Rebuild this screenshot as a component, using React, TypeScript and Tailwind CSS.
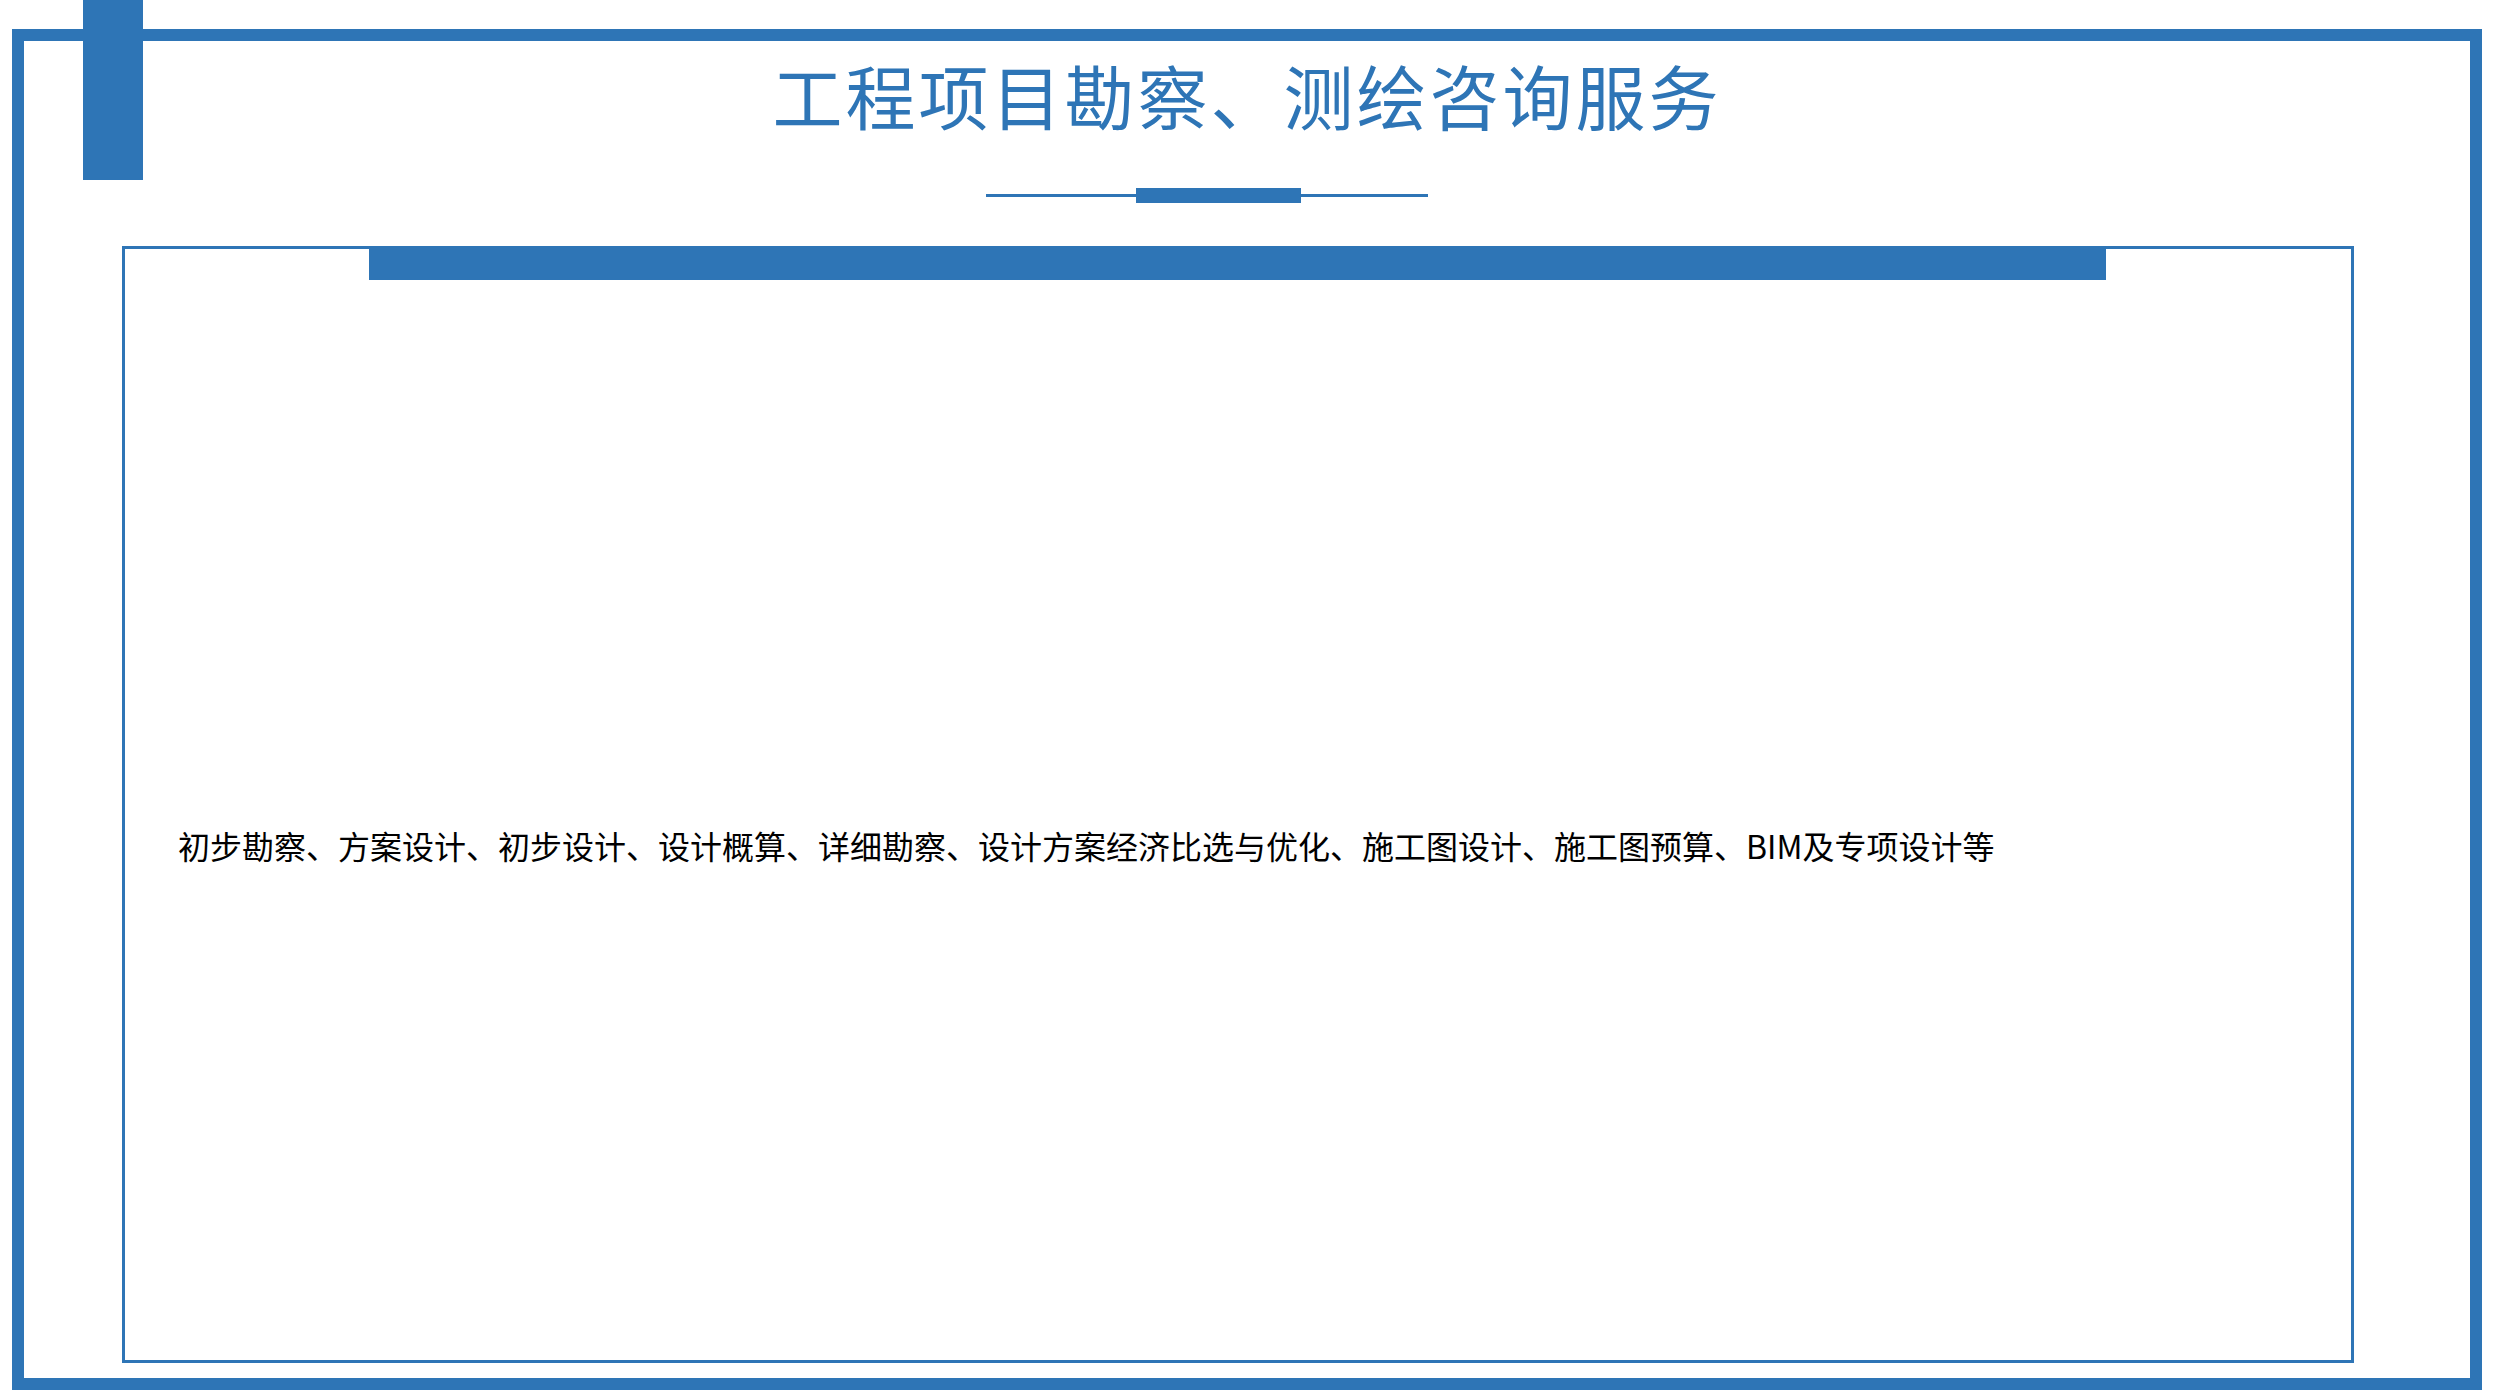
export default function App() {
  return (
    <div className="relative w-[2494px] h-[1396px] bg-white overflow-hidden" style={{ fontFamily: '"Noto Sans CJK SC", "Noto Sans", sans-serif' }}>
      <div className="absolute left-[12px] top-[29px] w-[2470px] h-[1361px] border-[12px] border-[#2E75B6]" />
      <div className="absolute left-[83px] top-0 w-[60px] h-[180px] bg-[#2E75B6]" />
      <div className="absolute left-0 top-[50px] w-full flex justify-center">
        <h1 className="text-[70px] leading-[90px] text-[#2E75B6] tracking-[3px]">工程项目勘察、测绘咨询服务</h1>
      </div>
      <div className="absolute left-[986px] top-[188px] w-[442px] h-[15px] flex items-center">
        <div className="h-[3px] w-[150px] bg-[#2E75B6]" />
        <div className="h-[15px] w-[165px] bg-[#2E75B6]" />
        <div className="h-[3px] flex-1 bg-[#2E75B6]" />
      </div>
      <div className="absolute left-[122px] top-[246px] w-[2232px] h-[1117px] border-[3px] border-[#2E75B6] flex items-center">
        <p className="ml-[53px] mt-[80px] text-[32px] text-black">初步勘察、方案设计、初步设计、设计概算、详细勘察、设计方案经济比选与优化、施工图设计、施工图预算、BIM及专项设计等</p>
      </div>
      <div className="absolute left-[369px] top-[246px] w-[1737px] h-[34px] bg-[#2E75B6]" />
    </div>
  );
}
